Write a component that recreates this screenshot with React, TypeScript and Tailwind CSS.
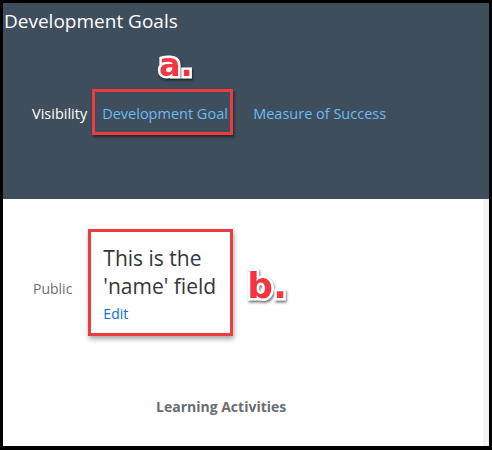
export default function App() {
  const font = { fontFamily: '"Open Sans", "Liberation Sans", sans-serif' };
  return (
    <div className="w-[492px] h-[450px] bg-black pt-[3px] pl-[3px] pr-[3px] pb-[4px]" style={font}>
      <div className="flex h-full flex-col overflow-hidden bg-white">
        {/* Header */}
        <div className="relative h-[196px] bg-[#3f4e5d] shrink-0">
          <h1 className="pl-[1px] pt-[5px] text-[19px] leading-[26px] text-white">Development Goals</h1>
          <span className="absolute left-[156px] top-[46px] text-[32px] font-bold leading-none text-[#f2353f] [-webkit-text-stroke:5px_white] [paint-order:stroke_fill] drop-shadow-[1px_2px_1px_rgba(0,0,0,0.5)]" style={{ fontFamily: '"DejaVu Sans", sans-serif' }}>
            a.
          </span>
          <div className="mt-[55px] flex items-center text-[14.5px]">
            <span className="ml-[29px] pt-[3px] text-white">Visibility</span>
            <div className="ml-[5px] flex h-[46px] w-[141px] items-center border-[3px] border-[#ee3b42] pl-[7px] pt-[3px] shadow-[1px_2px_3px_rgba(0,0,0,0.5)]">
              <span className="text-[#6cbbf2]">Development Goal</span>
            </div>
            <span className="ml-[20px] pt-[3px] text-[#6cbbf2]">Measure of Success</span>
          </div>
        </div>

        {/* Body */}
        <div className="relative flex-1 border-r-[6px] border-r-[#f2f2f2]">
          <div className="mt-[30px] flex items-center">
            <span className="ml-[30px] mt-[11px] text-[14px] text-[#6a6d70]">Public</span>
            <div className="ml-[16px] h-[107px] w-[145px] border-[3px] border-[#ee3b42] pl-[12px] pt-[12px] shadow-[1px_3px_5px_rgba(0,0,0,0.35)]">
              <p className="text-[21px] leading-[28px] text-[#32363a]">This is the</p>
              <p className="text-[21px] leading-[28px] text-[#32363a]">'name' field</p>
              <p className="mt-[4px] text-[14px] leading-[20px] text-[#0a6ed1]">Edit</p>
            </div>
            <span className="ml-[14px] mt-[6px] text-[36px] font-bold leading-none text-[#f2353f] [-webkit-text-stroke:5px_white] [paint-order:stroke_fill] drop-shadow-[1px_2px_1px_rgba(0,0,0,0.5)]" style={{ fontFamily: '"DejaVu Sans", sans-serif' }}>
              b.
            </span>
          </div>
          <p className="mt-[60px] ml-[153px] text-[14px] font-bold text-[#6a6d70]">Learning Activities</p>
        </div>
      </div>
    </div>
  );
}
